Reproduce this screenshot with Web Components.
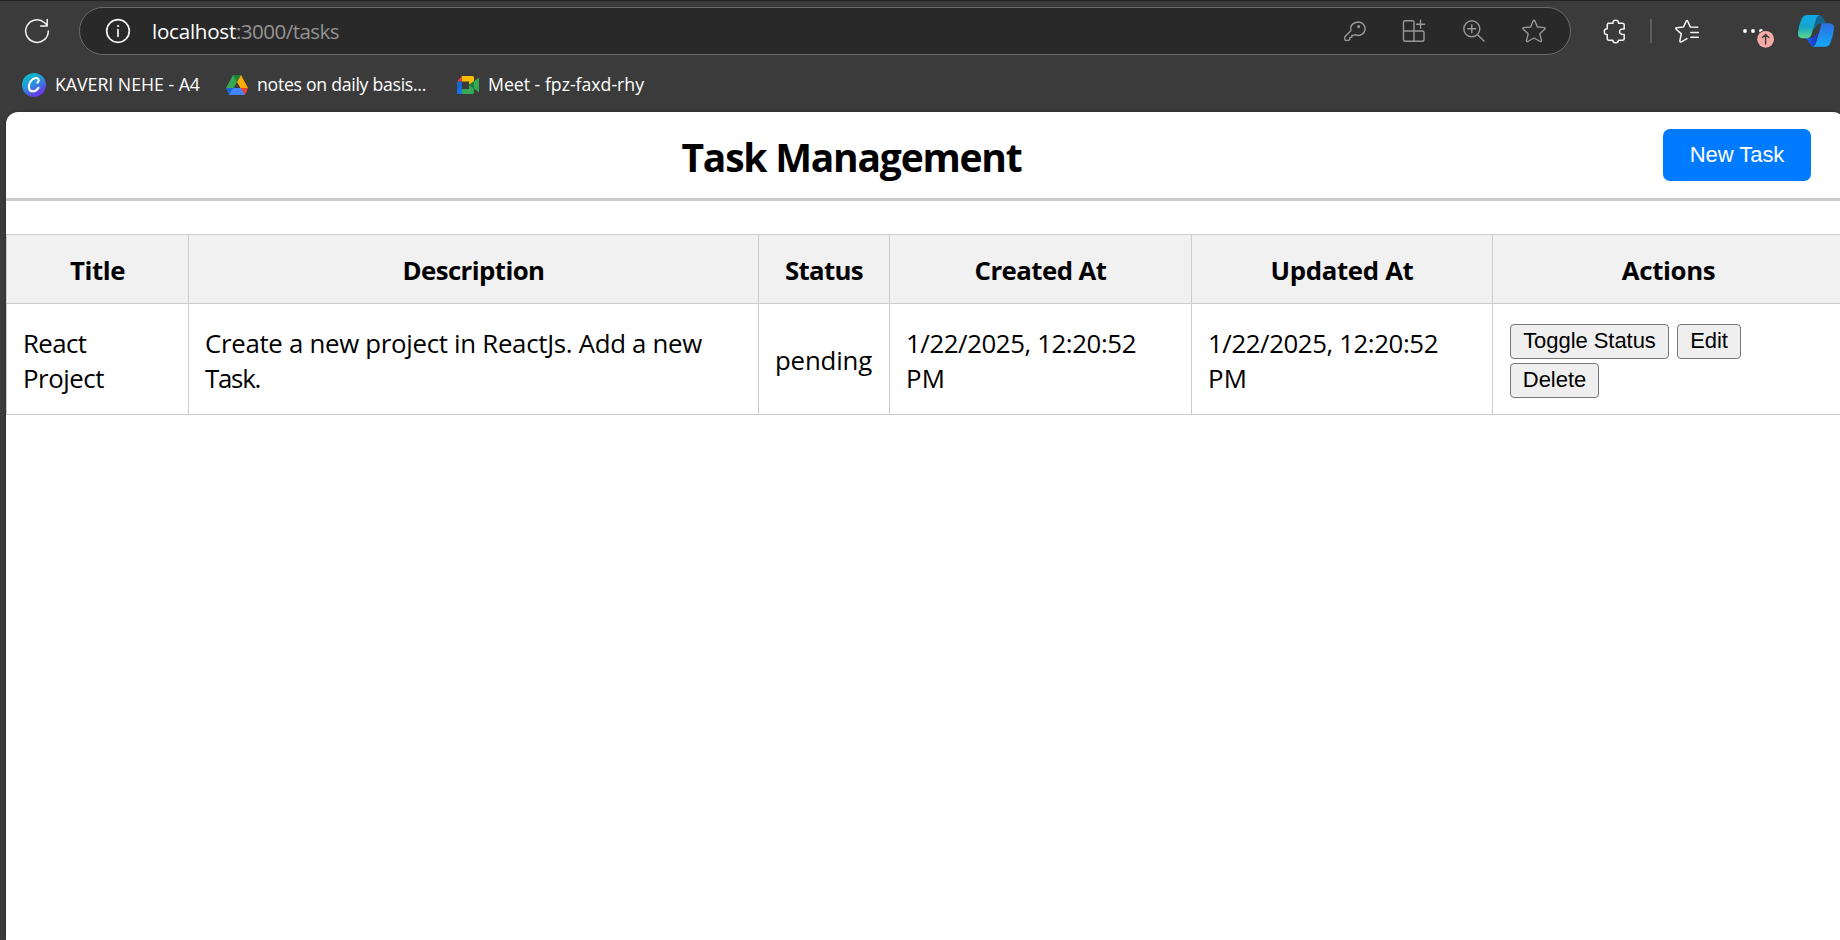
<!DOCTYPE html>
<html lang="en">
<head>
<meta charset="utf-8">
<title>Task Management</title>
<style>
html,body{margin:0;height:100%;overflow:hidden;background:#3b3b3b}
body{font-family:"Open Sans","Noto Sans",sans-serif}
</style>
</head>
<body>
<browser-window>
  <browser-toolbar slot="chrome"></browser-toolbar>
  <bookmarks-bar slot="chrome"></bookmarks-bar>
  <tasks-page></tasks-page>
</browser-window>
<script>
const define = (name, html, after) => {
  const tpl = document.createElement('template');
  tpl.innerHTML = html;
  customElements.define(name, class extends HTMLElement {
    constructor() {
      super();
      this.attachShadow({mode: 'open'}).append(tpl.content.cloneNode(true));
    }
    connectedCallback() { if (after) after.call(this); }
  });
};

/* A line of text whose tracking is set so that it is `w` pixels wide. */
define('fit-text', `<style>:host{display:inline-block;white-space:pre}</style><span><slot></slot></span>`, function () {
  const span = this.shadowRoot.querySelector('span');
  const w = parseFloat(this.getAttribute('w'));
  const n = this.textContent.length;
  this.style.letterSpacing = '0px';
  const natural = span.getBoundingClientRect().width;
  if (!natural) return;
  const ls = (w - natural) / n;
  this.style.letterSpacing = ls.toFixed(3) + 'px';
});

define('browser-window', `
<style>
:host{display:flex;flex-direction:column;width:1840px;height:940px;overflow:hidden;background:#3b3b3b;box-sizing:border-box;border-top:1px solid #222}
main{flex:1;min-height:0;margin-left:6px;width:1839px;background:#fff;border-radius:12px 12px 0 0;overflow:hidden;box-shadow:0 0 3px rgba(0,0,0,.35)}
</style>
<slot name="chrome"></slot><main><slot></slot></main>`);

define('browser-toolbar', `
<style>
:host{display:flex;align-items:center;height:60px;flex:none;color:#fff}
svg{display:block;flex:none;fill:none;stroke:#f4f4f4;stroke-width:1.5;stroke-linecap:round;stroke-linejoin:round}
.reload{margin-left:22px}
.address{display:flex;align-items:center;box-sizing:border-box;width:1492px;height:48px;margin-left:27px;border:1.5px solid #6c6c6c;border-radius:24px;background:#292929;font-size:20.6px;line-height:28px}
.address svg{stroke:#989898;stroke-width:1.4}
.address .info{margin-left:23px;stroke:#f4f4f4;stroke-width:1.7}
.url{margin-left:19px;flex:1;white-space:nowrap;color:#949494;display:flex}
.url b{font-weight:400;color:#fff}
.tools{display:flex;gap:30px;margin-right:21px}
.ext{margin-left:28px}
.bar{width:2px;height:24px;background:#5d5d5d;margin-left:21px}
.fav{margin-left:21px}
.more{margin-left:35px}
.copilot{margin-left:17px;stroke:none}
</style>
<svg class="reload" width="30" height="30" viewBox="22 16 30 30"><path d="M48.3 31A11.3 11.3 0 1 1 44.6 22.7L47 25M47.2 19.5V26H40.7"/></svg>
<div class="address">
  <svg class="info" width="30" height="30" viewBox="103 16 30 30"><circle cx="118" cy="31" r="11.3"/><path d="M118 29.7V36.3"/><circle cx="118" cy="26" r=".6" fill="#fff" stroke-width="1"/></svg>
  <div class="url"><b><fit-text w="84">localhost</fit-text></b><fit-text w="103">:3000/tasks</fit-text></div>
  <div class="tools">
    <svg width="30" height="30" viewBox="1339 16 30 30"><path d="M1356.8 22.2A6.7 6.7 0 1 1 1355.2 34.6L1353.8 35.4H1351.8V37.4H1349.8V39.2L1348.6 40.4H1346Q1344.8 40.4 1344.8 39.2V37.4Q1344.8 36.7 1345.3 36.2L1350.9 30.7Q1349.3 24 1356.8 22.2Z"/><circle cx="1358.7" cy="26.5" r=".8" fill="#989898"/></svg>
    <svg width="30" height="30" viewBox="1399 16 30 30"><path d="M1405 20.8H1412.5Q1414 20.8 1414 22.3V41.3M1403.5 31H1422.5Q1424 31 1424 32.5V39.8Q1424 41.3 1422.5 41.3H1405Q1403.5 41.3 1403.5 39.8V22.3Q1403.5 20.8 1405 20.8M1420.5 20.3V28.3M1416.5 24.3H1424.7"/></svg>
    <svg width="30" height="30" viewBox="1459 16 30 30"><circle cx="1471.8" cy="28.8" r="8"/><path d="M1471.8 24.8V32.8M1467.8 28.8H1475.8M1477.6 34.7L1484 41"/></svg>
    <svg width="30" height="30" viewBox="1519 16 30 30"><path d="M1533.2 20.8Q1534 19.4 1534.8 20.8L1537.4 27L1544.4 27.6Q1545.9 28 1544.9 29.1L1539.8 33.8L1541.5 40.6Q1541.5 42 1540.2 41.5L1534 38L1527.8 41.5Q1526.5 42 1526.5 40.6L1528.2 33.8L1523.1 29.1Q1522.1 28 1523.6 27.6L1530.6 27Z"/></svg>
  </div>
</div>
<svg class="ext" width="30" height="30" viewBox="1599 16 30 30"><path d="M1608 23.2H1613Q1612.7 20.2 1615.7 20.2T1618.5 23.2H1622.3Q1624.2 23.2 1624.2 25.1V29Q1619.6 28.6 1619.6 31.7T1624.2 34.6V38.5Q1624.2 40.2 1622.3 40.2H1618.5Q1618.3 42.8 1615.6 42.8T1612.8 40.2H1609Q1607.2 40.2 1607.2 38.5V34.6Q1604.3 34.8 1604.3 31.8T1607.2 28.8V25Q1607.2 23.2 1608.8 23.2"/></svg>
<div class="bar"></div>
<svg class="fav" width="30" height="30" viewBox="1673 16 30 30"><path d="M1697.7 27.3L1690.3 27L1687.7 21.2Q1687 19.8 1686.3 21.2L1683.5 26.9L1676.6 27.7Q1675.1 28.3 1676.2 29.3L1681.3 33.9L1679.8 40.8Q1679.8 42.6 1681.4 41.8L1687 38.7M1690.8 32.4H1698.3M1690.8 37.2H1698.3"/></svg>
<svg class="more" width="40" height="40" viewBox="1738 11 40 40"><g fill="#fff" stroke="none"><circle cx="1745" cy="31" r="1.9"/><circle cx="1753" cy="31" r="1.9"/><circle cx="1761" cy="31" r="1.9"/></g><circle cx="1765.6" cy="39.3" r="9.4" fill="#3b3b3b" stroke="none"/><circle cx="1765.6" cy="39.3" r="8.4" fill="#f5aaa5" stroke="none"/><path stroke="#3b3b3b" stroke-width="1.4" d="M1765.6 44V35M1762.4 37.6L1765.6 34.6L1768.8 37.6"/></svg>
<svg class="copilot" width="40" height="40" viewBox="1795 11 40 40">
  <defs>
    <linearGradient id="a" x1="0" y1="0" x2="0" y2="1"><stop offset="0" stop-color="#10a8e8"/><stop offset=".5" stop-color="#12a6c8"/><stop offset="1" stop-color="#5bd78c"/></linearGradient>
    <linearGradient id="b" x1="0" y1="0" x2="0" y2="1"><stop offset="0" stop-color="#2c6fe0"/><stop offset="1" stop-color="#14a9fb"/></linearGradient>
    <linearGradient id="c" x1="0" y1="0" x2="1" y2="0"><stop offset="0" stop-color="#1d6bd8"/><stop offset="1" stop-color="#1732d8"/></linearGradient>
  </defs>
  <path fill="#14668f" d="M1816 15H1819Q1822.500 15.500 1823.800 19.500Q1825 23.200 1828 23.500H1820Q1817 24 1815.500 28L1812 30Z"/>
  <path fill="url(#c)" d="M1804 38H1812L1818 33L1814.500 46.700Q1810.500 46.500 1809 42.500Q1807.500 38.500 1804 38Z"/>
  <path fill="url(#a)" d="M1807.500 15H1820.500Q1817 15.500 1816 19L1811.500 34.500Q1810.500 38 1806.500 38.300H1802Q1797.500 38 1798 32.500Q1799 24 1802 18Q1803.500 15 1807.500 15Z"/>
  <path fill="url(#b)" d="M1821.500 23.300H1829Q1834.500 23.500 1834 29Q1833 37 1830 43.500Q1828.500 46.800 1825 46.800H1811.500Q1815 46.500 1816 43L1820.500 27.500"/>
</svg>`);

define('bookmarks-bar', `
<style>
:host{display:flex;align-items:center;height:51px;flex:none;color:#fff;font-size:17.7px;line-height:24px;box-sizing:border-box;padding:0 0 4px 22px}
a{display:flex;align-items:center}
svg{display:block;width:24px;height:24px;margin-right:9px}
fit-text{margin:-1px 0 1px}
.d{margin-left:25px}.d svg{margin-right:8px}
.m{margin-left:30px}.m svg{margin-right:8px}
</style>
<a><svg viewBox="0 0 24 24"><defs><linearGradient id="g" x1=".2" y1="0" x2=".75" y2="1"><stop offset="0" stop-color="#06c3c8"/><stop offset=".45" stop-color="#2a93dc"/><stop offset="1" stop-color="#7426ec"/></linearGradient></defs><circle cx="12" cy="12" r="12" fill="url(#g)"/><path d="M15.300 9.700C18 7.500 16.500 4.700 13.500 5C9.500 5.500 6.300 10.500 7 15C7.700 19.500 13 19.500 16.500 14.800" fill="none" stroke="#fff" stroke-width="2" stroke-linecap="round"/></svg><fit-text w="145">KAVERI NEHE - A4</fit-text></a>
<a class="d"><svg viewBox="0 0 24 24"><path fill="#34a853" d="M8 2H13L12 9L5.500 20.500L1 15Z"/><path fill="#188038" d="M8 2H16L12 9Z"/><path fill="#fbad06" d="M12 9L16 2L23 15H15.500Z"/><path fill="#4285f4" d="M6 15H18L20 22H4Z"/><path fill="#1967d2" d="M1 15H8L4 22Z"/><path fill="#ea4335" d="M15.500 15H23L20 22Z"/></svg><fit-text w="169">notes on daily basis...</fit-text></a>
<a class="m"><svg viewBox="0 0 24 24"><path fill="#fbbc04" d="M6 3H16.500Q18 3 18 4.500V11H13V8.500H6Z"/><path fill="#ea4335" d="M6 3V8.500H1Z"/><path fill="#1967d2" d="M1 8.500H6V16H1Z"/><path fill="#1a73e8" d="M1 16H6V21H2.500Q1 21 1 19.500Z"/><path fill="#34a853" d="M6 16H13V12L23 4.500V19.500L18 15.500V19.500Q18 21 16.500 21H6Z"/><path fill="#188038" d="M13 12L18 8V16Z"/></svg><fit-text w="156">Meet - fpz-faxd-rhy</fit-text></a>`);

define('plain-button', `
<style>
:host{display:inline-block}
button{font:22px/25px "Liberation Sans",Arial,sans-serif;letter-spacing:-.05px;color:#000;height:35px;width:100%;padding:0 0 2px;border:1px solid #767676;border-radius:4px;background:#efefef;display:block;box-sizing:border-box}
:host([primary]) button{background:#007bff;color:#fff;border:0;border-radius:7px;height:52px;padding:0 0 2px}
</style><button><slot></slot></button>`);

define('tasks-page', `
<style>
:host{display:block;color:#000}
header{display:grid;grid-template-columns:1fr auto;align-items:center;height:89px;box-sizing:border-box;border-bottom:3px solid #ccc;padding-right:34px}
h1{margin:0 0 0 34px;text-align:center;font-size:39px;line-height:52px;font-weight:700;padding-top:3px}
.table{margin-top:33px;display:grid;grid-template-columns:183px 570px 131px 302px 301px 352px;grid-template-rows:70px 111px;font-size:25.8px;line-height:35px}
.table>div{box-sizing:border-box;border-right:1px solid #ccc;border-bottom:1px solid #ccc;padding:3px 0 0 16px;display:flex;flex-direction:column;justify-content:center;align-items:flex-start}
.table>div:nth-child(6n+1){border-left:1px solid #ccc}
.table>.h{background:#f1f1f1;border-top:1px solid #ccc;font-weight:700;align-items:center;padding:3px 0 0}
.table>.act{padding:4px 0 0 17px}
.row{display:flex;gap:8px}
.row+.row{margin-top:4px}
</style>
<header><h1><fit-text w="340">Task Management</fit-text></h1><plain-button primary style="width:148px">New Task</plain-button></header>
<div class="table">
  <div class="h"><fit-text w="55">Title</fit-text></div><div class="h"><fit-text w="142">Description</fit-text></div><div class="h"><fit-text w="78">Status</fit-text></div><div class="h"><fit-text w="132">Created At</fit-text></div><div class="h"><fit-text w="143">Updated At</fit-text></div><div class="h"><fit-text w="93.5">Actions</fit-text></div>
  <div><fit-text w="63.500">React</fit-text><fit-text w="81">Project</fit-text></div>
  <div><fit-text w="497">Create a new project in ReactJs. Add a new</fit-text><fit-text w="55">Task.</fit-text></div>
  <div><fit-text w="97">pending</fit-text></div>
  <div><fit-text w="230">1/22/2025, 12:20:52</fit-text><fit-text w="39">PM</fit-text></div>
  <div><fit-text w="230">1/22/2025, 12:20:52</fit-text><fit-text w="39">PM</fit-text></div>
  <div class="act"><div class="row"><plain-button style="width:159px">Toggle Status</plain-button><plain-button style="width:64px">Edit</plain-button></div><div class="row"><plain-button style="width:89px">Delete</plain-button></div></div>
</div>`);
</script>
</body>
</html>
